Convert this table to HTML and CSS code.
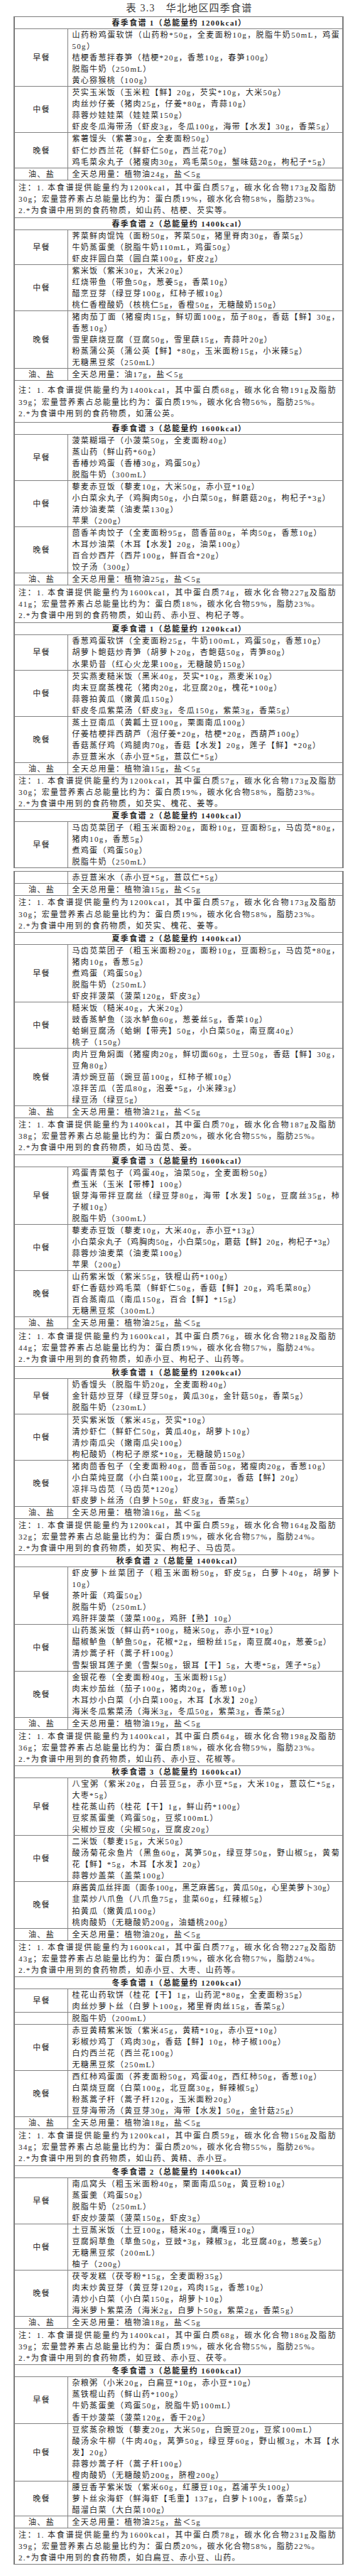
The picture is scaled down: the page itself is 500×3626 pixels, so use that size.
FILE: index.html
```html
<!DOCTYPE html>
<html lang="zh-CN">
<head>
<meta charset="utf-8">
<title>表3.3 华北地区四季食谱</title>
<link rel="stylesheet" href="styles.css">
</head>
<body>
<div class="title">表 3.3&emsp;华北地区四季食谱</div>

<div class="tbl">
  <div class="hd">春季食谱 1（总能量约 1200kcal）</div>
  <div class="row"><div class="lab">早餐</div><div class="items">
    <p class="full">山药粉鸡蛋软饼（山药粉*50g，全麦面粉10g，脱脂牛奶50mL，鸡蛋</p>
    <p>50g）</p>
    <p>桔梗香葱拌春笋（桔梗*20g，香葱10g，春笋100g）</p>
    <p>脱脂牛奶（250mL）</p>
    <p>黄心猕猴桃（100g）</p>
  </div></div>
  <div class="row"><div class="lab">中餐</div><div class="items">
    <p>芡实玉米饭（玉米粒【鲜】20g，芡实*10g，大米50g）</p>
    <p>肉丝炒仔姜（猪肉25g，仔姜*80g，青蒜10g）</p>
    <p>蒜蓉炒娃娃菜（娃娃菜150g）</p>
    <p>虾皮冬瓜海带汤（虾皮3g，冬瓜100g，海带【水发】30g，香菜5g）</p>
  </div></div>
  <div class="row"><div class="lab">晚餐</div><div class="items">
    <p>紫薯馒头（紫薯30g，全麦面粉50g）</p>
    <p>虾仁炒西兰花（鲜虾仁50g，西兰花70g）</p>
    <p>鸡毛菜汆丸子（猪瘦肉30g，鸡毛菜50g，蟹味菇20g，枸杞子*5g）</p>
  </div></div>
  <div class="row"><div class="lab">油、盐</div><div class="items"><p>全天总用量：植物油24g，盐＜5g</p></div></div>
  <div class="note mid">
    <p class="full">注：1. 本食谱提供能量约为1200kcal，其中蛋白质57g，碳水化合物173g及脂肪</p>
    <p>30g；宏量营养素占总能量比约为：蛋白质19%，碳水化合物58%，脂肪23%。</p>
    <p>2.*为食谱中用到的食药物质，如山药、桔梗、芡实等。</p>
  </div>

  <div class="hd">春季食谱 2（总能量约 1400kcal）</div>
  <div class="row"><div class="lab">早餐</div><div class="items">
    <p>荠菜鲜肉馄饨（面粉50g，荠菜50g，猪里脊肉30g，香菜5g）</p>
    <p>牛奶蒸蛋羹（脱脂牛奶110mL，鸡蛋50g）</p>
    <p>虾皮拌圆白菜（圆白菜100g，虾皮2g）</p>
  </div></div>
  <div class="row"><div class="lab">中餐</div><div class="items">
    <p>紫米饭（紫米30g，大米20g）</p>
    <p>红烧带鱼（带鱼50g，葱姜5g，香菜10g）</p>
    <p>醋烹豆芽（绿豆芽100g，红柿子椒10g）</p>
    <p>桃仁香橙酸奶（核桃仁5g，香橙50g，无糖酸奶150g）</p>
  </div></div>
  <div class="row"><div class="lab">晚餐</div><div class="items">
    <p class="full">猪肉茄丁面（猪瘦肉15g，鲜切面100g，茄子80g，香菇【鲜】30g，</p>
    <p>香葱10g）</p>
    <p>雪里蕻烧豆腐（豆腐50g，雪里蕻15g，青蒜叶20g）</p>
    <p>粉蒸蒲公英（蒲公英【鲜】*80g，玉米面粉15g，小米辣5g）</p>
    <p>无糖黑豆浆（250mL）</p>
  </div></div>
  <div class="row"><div class="lab">油、盐</div><div class="items"><p>全天总用量：油17g，盐＜5g</p></div></div>
  <div class="note tall">
    <p class="full">注：1. 本食谱提供能量约为1400kcal，其中蛋白质68g，碳水化合物191g及脂肪</p>
    <p>39g；宏量营养素占总能量比约为：蛋白质19%，碳水化合物56%，脂肪25%。</p>
    <p>2.*为食谱中用到的食药物质，如蒲公英。</p>
  </div>

  <div class="hd">春季食谱 3（总能量约 1600kcal）</div>
  <div class="row"><div class="lab">早餐</div><div class="items">
    <p>菠菜糊塌子（小菠菜50g，全麦面粉40g）</p>
    <p>蒸山药（鲜山药*60g）</p>
    <p>香椿炒鸡蛋（香椿30g，鸡蛋50g）</p>
    <p>脱脂牛奶（300mL）</p>
  </div></div>
  <div class="row"><div class="lab">中餐</div><div class="items">
    <p>藜麦赤豆饭（藜麦10g，大米50g，赤小豆*10g）</p>
    <p>小白菜汆丸子（鸡胸肉50g，小白菜50g，鲜蘑菇20g，枸杞子*3g）</p>
    <p>清炒油麦菜（油麦菜130g）</p>
    <p>苹果（200g）</p>
  </div></div>
  <div class="row"><div class="lab">晚餐</div><div class="items">
    <p>茴香羊肉饺子（全麦面粉95g，茴香苗80g，羊肉50g，香葱10g）</p>
    <p>木耳炒油菜（木耳【水发】20g，油菜100g）</p>
    <p>百合炒西芹（西芹100g，鲜百合*20g）</p>
    <p>饺子汤（300g）</p>
  </div></div>
  <div class="row"><div class="lab">油、盐</div><div class="items"><p>全天总用量：植物油25g，盐＜5g</p></div></div>
  <div class="note mid">
    <p class="full">注：1. 本食谱提供能量约为1600kcal，其中蛋白质74g，碳水化合物227g及脂肪</p>
    <p>41g；宏量营养素占总能量比约为：蛋白质18%，碳水化合物59%，脂肪23%。</p>
    <p>2.*为食谱中用到的食药物质，如山药、赤小豆、枸杞子等。</p>
  </div>

  <div class="hd">夏季食谱 1（总能量约 1200kcal）</div>
  <div class="row"><div class="lab">早餐</div><div class="items">
    <p>香葱鸡蛋软饼（全麦面粉25g，牛奶100mL，鸡蛋50g，香葱10g）</p>
    <p>胡萝卜鲍菇炒青笋（胡萝卜20g，杏鲍菇50g，青笋80g）</p>
    <p>水果奶昔（红心火龙果100g，无糖酸奶150g）</p>
  </div></div>
  <div class="row"><div class="lab">中餐</div><div class="items">
    <p>芡实燕麦糙米饭（黑米40g，芡实*10g，燕麦米10g）</p>
    <p>肉末豆腐蒸槐花（猪肉20g，北豆腐20g，槐花*100g）</p>
    <p>蒜蓉拍黄瓜（嫩黄瓜150g）</p>
    <p>虾皮冬瓜紫菜汤（虾皮3g，冬瓜150g，紫菜3g，香菜5g）</p>
  </div></div>
  <div class="row"><div class="lab">晚餐</div><div class="items">
    <p>蒸土豆南瓜（黄瓤土豆100g，栗面南瓜100g）</p>
    <p>仔姜桔梗拌西葫芦（泡仔姜*20g，桔梗*20g，西葫芦100g）</p>
    <p>香菇蒸仔鸡（鸡腿肉70g，香菇【水发】20g，莲子【鲜】*20g）</p>
    <p>赤豆薏米水（赤小豆*5g，薏苡仁*5g）</p>
  </div></div>
  <div class="row"><div class="lab">油、盐</div><div class="items"><p>全天总用量：植物油15g，盐＜5g</p></div></div>
  <div class="note short">
    <p class="full">注：1. 本食谱提供能量约为1200kcal，其中蛋白质57g，碳水化合物173g及脂肪</p>
    <p>30g；宏量营养素占总能量比约为：蛋白质19%，碳水化合物58%，脂肪23%。</p>
    <p>2.*为食谱中用到的食药物质，如芡实、槐花、姜等。</p>
  </div>

  <div class="hd">夏季食谱 2（总能量约 1400kcal）</div>
  <div class="row"><div class="lab">早餐</div><div class="items">
    <p class="full">马齿苋菜团子（粗玉米面粉20g，面粉10g，豆面粉5g，马齿苋*80g，</p>
    <p>猪肉10g，香葱5g）</p>
    <p>煮鸡蛋（鸡蛋50g）</p>
    <p>脱脂牛奶（250mL）</p>
  </div></div>
</div>

<div class="tbl tbl-next">
  <div class="row first"><div class="lab"></div><div class="items"><p>赤豆薏米水（赤小豆*5g，薏苡仁*5g）</p></div></div>
  <div class="row"><div class="lab">油、盐</div><div class="items"><p>全天总用量：植物油15g，盐＜5g</p></div></div>
  <div class="note">
    <p class="full">注：1. 本食谱提供能量约为1200kcal，其中蛋白质57g，碳水化合物173g及脂肪</p>
    <p>30g；宏量营养素占总能量比约为：蛋白质19%，碳水化合物58%，脂肪23%。</p>
    <p>2.*为食谱中用到的食药物质，如芡实、槐花、姜等。</p>
  </div>

  <div class="hd">夏季食谱 2（总能量约 1400kcal）</div>
  <div class="row"><div class="lab">早餐</div><div class="items">
    <p class="full">马齿苋菜团子（粗玉米面粉20g，面粉10g，豆面粉5g，马齿苋*80g，</p>
    <p>猪肉10g，香葱5g）</p>
    <p>煮鸡蛋（鸡蛋50g）</p>
    <p>脱脂牛奶（250mL）</p>
    <p>虾皮拌菠菜（菠菜120g，虾皮3g）</p>
  </div></div>
  <div class="row"><div class="lab">中餐</div><div class="items">
    <p>糙米饭（糙米40g，大米20g）</p>
    <p>豉香蒸鲈鱼（淡水鲈鱼60g，葱姜丝5g，香菜10g）</p>
    <p>蛤蜊豆腐汤（蛤蜊【带壳】50g，小白菜50g，南豆腐40g）</p>
    <p>桃子（150g）</p>
  </div></div>
  <div class="row"><div class="lab">晚餐</div><div class="items">
    <p class="full">肉片豆角焖面（猪瘦肉20g，鲜切面60g，土豆50g，香菇【鲜】30g，</p>
    <p>豆角80g）</p>
    <p>清炒豌豆苗（豌豆苗100g，红柿子椒10g）</p>
    <p>凉拌苦瓜（苦瓜80g，泡姜*5g，小米辣3g）</p>
    <p>绿豆汤（绿豆5g）</p>
  </div></div>
  <div class="row"><div class="lab">油、盐</div><div class="items"><p>全天总用量：植物油21g，盐＜5g</p></div></div>
  <div class="note">
    <p class="full">注：1. 本食谱提供能量约为1400kcal，其中蛋白质70g，碳水化合物187g及脂肪</p>
    <p>38g；宏量营养素占总能量比约为：蛋白质20%，碳水化合物55%，脂肪25%。</p>
    <p>2.*为食谱中用到的食药物质，如马齿苋、姜。</p>
  </div>

  <div class="hd">夏季食谱 3（总能量约 1600kcal）</div>
  <div class="row"><div class="lab">早餐</div><div class="items">
    <p>鸡蛋青菜包子（鸡蛋40g，油菜50g，全麦面粉50g）</p>
    <p>煮玉米（玉米【带棒】100g）</p>
    <p class="full">银芽海带拌豆腐丝（绿豆芽80g，海带【水发】50g，豆腐丝35g，柿</p>
    <p>子椒10g）</p>
    <p>脱脂牛奶（300mL）</p>
  </div></div>
  <div class="row"><div class="lab">中餐</div><div class="items">
    <p>藜麦赤豆饭（藜麦10g，大米40g，赤小豆*13g）</p>
    <p class="tight">小白菜汆丸子（鸡胸肉50g，小白菜50g，蘑菇【鲜】20g，枸杞子*3g）</p>
    <p>蒜蓉炒油麦菜（油麦菜100g）</p>
    <p>苹果（200g）</p>
  </div></div>
  <div class="row"><div class="lab">晚餐</div><div class="items">
    <p>山药紫米饭（紫米55g，铁棍山药*100g）</p>
    <p>虾仁香菇炒鸡毛菜（鲜虾仁50g，香菇【鲜】20g，鸡毛菜80g）</p>
    <p>百合蒸南瓜（南瓜150g，百合【鲜】*15g）</p>
    <p>无糖黑豆浆（300mL）</p>
  </div></div>
  <div class="row"><div class="lab">油、盐</div><div class="items"><p>全天总用量：植物油25g，盐＜5g</p></div></div>
  <div class="note mid">
    <p class="full">注：1. 本食谱提供能量约为1600kcal，其中蛋白质76g，碳水化合物218g及脂肪</p>
    <p>44g；宏量营养素占总能量比约为：蛋白质19%，碳水化合物57%，脂肪24%。</p>
    <p>2.*为食谱中用到的食药物质，如赤小豆、枸杞子、山药等。</p>
  </div>

  <div class="hd">秋季食谱 1（总能量约 1200kcal）</div>
  <div class="row"><div class="lab">早餐</div><div class="items">
    <p>奶香馒头（脱脂牛奶20g，全麦面粉40g）</p>
    <p>金针菇炒豆芽（绿豆芽50g，黄瓜30g，金针菇50g，香菜5g）</p>
    <p>脱脂牛奶（230mL）</p>
  </div></div>
  <div class="row"><div class="lab">中餐</div><div class="items">
    <p>芡实紫米饭（紫米45g，芡实*10g）</p>
    <p>清炒虾仁（鲜虾仁50g，黄瓜40g，胡萝卜10g）</p>
    <p>清炒南瓜尖（嫩南瓜尖100g）</p>
    <p>枸杞酸奶（枸杞子原浆*10g，无糖酸奶150g）</p>
  </div></div>
  <div class="row"><div class="lab">晚餐</div><div class="items">
    <p>猪肉茴香包子（全麦面粉40g，茴香苗50g，猪瘦肉20g，香葱10g）</p>
    <p>小白菜炖豆腐（小白菜100g，北豆腐30g，香菇【鲜】20g）</p>
    <p>凉拌马齿苋（马齿苋*120g）</p>
    <p>虾皮萝卜丝汤（白萝卜50g，虾皮3g，香菜5g）</p>
  </div></div>
  <div class="row"><div class="lab">油、盐</div><div class="items"><p>全天总用量：植物油16g，盐＜5g</p></div></div>
  <div class="note">
    <p class="full">注：1. 本食谱提供能量约为1200kcal，其中蛋白质59g，碳水化合物164g及脂肪</p>
    <p>32g；宏量营养素占总能量比约为：蛋白质19%，碳水化合物57%，脂肪24%。</p>
    <p>2.*为食谱中用到的食药物质，如芡实、枸杞子、马齿苋。</p>
  </div>

  <div class="hd">秋季食谱 2（总能量 1400kcal）</div>
  <div class="row"><div class="lab">早餐</div><div class="items">
    <p class="full">虾皮萝卜丝菜团子（粗玉米面粉50g，虾皮5g，白萝卜40g，胡萝卜</p>
    <p>10g）</p>
    <p>茶叶蛋（鸡蛋50g）</p>
    <p>脱脂牛奶（250mL）</p>
    <p>鸡肝拌菠菜（菠菜100g，鸡肝【熟】10g）</p>
  </div></div>
  <div class="row"><div class="lab">中餐</div><div class="items">
    <p>山药蒸米饭（鲜山药*100g，糙米50g，赤小豆*10g）</p>
    <p>醋椒鲈鱼（鲈鱼50g，花椒*2g，细粉丝15g，南豆腐40g，葱姜5g）</p>
    <p>清炒蒿子秆（蒿子秆100g）</p>
    <p>雪梨银耳莲子羹（雪梨50g，银耳【干】5g，大枣*5g，莲子*5g）</p>
  </div></div>
  <div class="row"><div class="lab">晚餐</div><div class="items">
    <p>金银花卷（全麦面粉40g，玉米面粉15g）</p>
    <p>肉末炒茄丝（茄子100g，猪肉20g，香葱10g）</p>
    <p>木耳炒小白菜（小白菜100g，木耳【水发】20g）</p>
    <p>海米冬瓜紫菜汤（海米3g，冬瓜50g，紫菜3g，香菜5g）</p>
  </div></div>
  <div class="row"><div class="lab">油、盐</div><div class="items"><p>全天总用量：植物油19g，盐＜5g</p></div></div>
  <div class="note">
    <p class="full">注：1. 本食谱提供能量约为1400kcal，其中蛋白质64g，碳水化合物198g及脂肪</p>
    <p>36g；宏量营养素占总能量比约为：蛋白质18%，碳水化合物59%，脂肪23%。</p>
    <p>2.*为食谱中用到的食药物质，如山药、赤小豆、花椒等。</p>
  </div>

  <div class="hd">秋季食谱 3（总能量约 1600kcal）</div>
  <div class="row"><div class="lab">早餐</div><div class="items">
    <p class="full">八宝粥（紫米20g，白芸豆5g，赤小豆*5g，大米10g，薏苡仁*5g，</p>
    <p>大枣*5g）</p>
    <p>桂花蒸山药（桂花【干】1g，鲜山药*100g）</p>
    <p>豆浆蒸蛋羹（鸡蛋50g，豆浆100mL）</p>
    <p>尖椒炒豆皮（尖椒50g，豆腐皮20g）</p>
  </div></div>
  <div class="row"><div class="lab">中餐</div><div class="items">
    <p>二米饭（藜麦15g，大米50g）</p>
    <p class="full">酸汤菊花汆鱼片（黑鱼60g，莴笋50g，绿豆芽50g，野山椒5g，黄菊</p>
    <p>花【鲜】*5g，木耳【水发】20g）</p>
    <p>蒜蓉炒盖菜（盖菜100g）</p>
  </div></div>
  <div class="row"><div class="lab">晚餐</div><div class="items">
    <p class="tight">麻酱黄瓜丝拌面（面条100g，黑芝麻酱5g，黄瓜50g，心里美萝卜30g）</p>
    <p>韭菜炒八爪鱼（八爪鱼75g，韭菜60g，红辣椒5g）</p>
    <p>拍黄瓜（嫩黄瓜100g）</p>
    <p>桃肉酸奶（无糖酸奶200g，油蟠桃200g）</p>
  </div></div>
  <div class="row"><div class="lab">油、盐</div><div class="items"><p>全天总用量：植物油20g，盐＜5g</p></div></div>
  <div class="note">
    <p class="full">注：1. 本食谱提供能量约为1600kcal，其中蛋白质77g，碳水化合物227g及脂肪</p>
    <p>43g；宏量营养素占总能量比约为：蛋白质19%，碳水化合物57%，脂肪24%。</p>
    <p>2.*为食谱中用到的食药物质，如赤小豆、大枣、山药等。</p>
  </div>

  <div class="hd">冬季食谱 1（总能量约 1200kcal）</div>
  <div class="row"><div class="lab">早餐</div><div class="items">
    <p>桂花山药软饼（桂花【干】1g，山药泥*80g，全麦面粉35g）</p>
    <p>肉丝炒萝卜丝（白萝卜100g，猪里脊肉丝15g，香菜5g）</p>
  </div></div>
  <div class="row"><div class="lab"></div><div class="items"><p>脱脂牛奶（200mL）</p></div></div>
  <div class="row"><div class="lab">中餐</div><div class="items">
    <p>赤豆黄精紫米饭（紫米45g，黄精*10g，赤小豆*10g）</p>
    <p>彩椒炒鸡丁（鸡肉30g，香菇【鲜】10g，柿子椒100g）</p>
    <p>白灼西兰花（西兰花100g）</p>
    <p>无糖黑豆浆（250mL）</p>
  </div></div>
  <div class="row"><div class="lab">晚餐</div><div class="items">
    <p>西红柿鸡蛋面（荞麦面粉50g，鸡蛋40g，西红柿50g，香葱10g）</p>
    <p>白菜烧豆腐（白菜100g，北豆腐30g，鲜辣椒5g）</p>
    <p>粉蒸蒿子秆（蒿子秆120g，玉米面粉20g）</p>
    <p>豆芽海带汤（黄豆芽30g，海带【水发】50g，金针菇25g）</p>
  </div></div>
  <div class="row"><div class="lab">油、盐</div><div class="items"><p>全天总用量：植物油18g，盐＜5g</p></div></div>
  <div class="note">
    <p class="full">注：1. 本食谱提供能量约为1200kcal，其中蛋白质59g，碳水化合物156g及脂肪</p>
    <p>34g；宏量营养素占总能量比约为：蛋白质20%，碳水化合物55%，脂肪26%。</p>
    <p>2.*为食谱中用到的食药物质，如山药、黄精、赤小豆。</p>
  </div>

  <div class="hd">冬季食谱 2（总能量约 1400kcal）</div>
  <div class="row"><div class="lab">早餐</div><div class="items">
    <p>南瓜窝头（粗玉米面粉40g，栗面南瓜50g，黄豆粉10g）</p>
    <p>蒸蛋羹（鸡蛋50g）</p>
    <p>脱脂牛奶（250mL）</p>
    <p>虾皮炒菠菜（菠菜150g，虾皮3g）</p>
  </div></div>
  <div class="row"><div class="lab">中餐</div><div class="items">
    <p>土豆蒸米饭（土豆100g，糙米40g，鹰嘴豆10g）</p>
    <p>豆腐焖草鱼（草鱼50g，豆豉*3g，辣椒3g，北豆腐40g，葱姜5g）</p>
    <p>无糖黑豆浆（200mL）</p>
    <p>柚子（200g）</p>
  </div></div>
  <div class="row"><div class="lab">晚餐</div><div class="items">
    <p>茯苓发糕（茯苓粉*15g，全麦面粉35g）</p>
    <p>肉末炒黄豆芽（黄豆芽120g，鸡肉15g，香葱10g）</p>
    <p>清炒小白菜（小白菜150g，胡萝卜10g）</p>
    <p>海米萝卜紫菜汤（海米2g，白萝卜50g，紫菜2g，香菜5g）</p>
  </div></div>
  <div class="row"><div class="lab">油、盐</div><div class="items"><p>全天总用量：植物油18g，盐＜5g</p></div></div>
  <div class="note">
    <p class="full">注：1. 本食谱提供能量约为1400kcal，其中蛋白质68g，碳水化合物186g及脂肪</p>
    <p>39g；宏量营养素占总能量比约为：蛋白质19%，碳水化合物55%，脂肪25%。</p>
    <p>2.*为食谱中用到的食药物质，如豆豉、赤小豆、茯苓。</p>
  </div>

  <div class="hd">冬季食谱 3（总能量约 1600kcal）</div>
  <div class="row"><div class="lab">早餐</div><div class="items">
    <p>杂粮粥（小米20g，白扁豆*10g，赤小豆*10g）</p>
    <p>蒸铁棍山药（鲜山药*100g）</p>
    <p>牛奶蒸蛋羹（鸡蛋50g，脱脂牛奶100mL）</p>
    <p>香干炒菠菜（菠菜120g，香干20g）</p>
  </div></div>
  <div class="row"><div class="lab">中餐</div><div class="items">
    <p>豆浆蒸杂粮饭（藜麦20g，大米50g，白豌豆20g，豆浆100mL）</p>
    <p class="full">酸汤汆牛柳（牛肉40g，莴笋50g，绿豆芽60g，野山椒3g，木耳【水</p>
    <p>发】20g）</p>
    <p>蒜蓉炒蒿子秆（蒿子秆100g）</p>
    <p>橙肉酸奶（无糖酸奶200g，脐橙200g）</p>
  </div></div>
  <div class="row"><div class="lab">晚餐</div><div class="items">
    <p>腰豆香芋紫米饭（紫米60g，红腰豆10g，荔浦芋头100g）</p>
    <p>萝卜丝汆海虾（鲜海虾【毛重】137g，白萝卜100g，香菜5g）</p>
    <p>醋溜白菜（大白菜100g）</p>
  </div></div>
  <div class="row"><div class="lab">油、盐</div><div class="items"><p>全天总用量：植物油25g，盐＜5g</p></div></div>
  <div class="note">
    <p class="full">注：1. 本食谱提供能量约为1600kcal，其中蛋白质78g，碳水化合物231g及脂肪</p>
    <p>39g；宏量营养素占总能量比约为：蛋白质20%，碳水化合物58%，脂肪22%。</p>
    <p>2.*为食谱中用到的食药物质，如白扁豆、赤小豆、山药。</p>
  </div>
</div>
</body>
</html>
```

FILE: styles.css
```css
html, body {
  margin: 0;
  padding: 0;
  background: #ffffff;
}

body {
  width: 500px;
  font-family: "Liberation Serif", "Noto Sans CJK SC", serif;
  color: #1f1f1f;
}

.title {
  width: 465px;
  margin-left: 19px;
  box-sizing: border-box;
  padding-left: 30px;
  height: 23px;
  line-height: 23px;
  text-align: center;
  font-size: 14px;
  letter-spacing: 1.2px;
  color: #3a3a3a;
}

.tbl {
  width: 465px;
  margin-left: 19px;
  box-sizing: border-box;
  border: 1px solid #7f7f7f;
  border-left-width: 2px;
  border-right-width: 2px;
  font-size: 11px;
  letter-spacing: 1.3px;
  line-height: 16.05px;
}

.tbl-next {
  margin-top: 4px;
}

.hd {
  border-top: 1px solid #858585;
  text-align: center;
  font-weight: 700;
  white-space: nowrap;
  padding-left: 2px;
}

.tbl > .hd:first-child,
.tbl > .row.first {
  border-top: none;
}

.row {
  display: grid;
  grid-template-columns: 75px 1fr;
  border-top: 1px solid #858585;
}

.lab {
  display: flex;
  align-items: center;
  justify-content: center;
  border-right: 1px solid #858585;
  padding-left: 1px;
}

.items {
  padding: 0 3px 0 5.5px;
  min-width: 0;
}

.items p,
.note p {
  margin: 0;
  white-space: nowrap;
}

.full {
  text-align: justify;
  text-align-last: justify;
}

.items p.tight {
  letter-spacing: 0.8px;
}

.note {
  border-top: 1px solid #858585;
  padding: 1px 8px 1px 5px;
}

.note.mid {
  padding-top: 2px;
  padding-bottom: 2px;
}

.note.tall {
  padding-top: 5px;
  padding-bottom: 4px;
}

.note.short {
  padding-top: 0;
  padding-bottom: 0;
}
```
